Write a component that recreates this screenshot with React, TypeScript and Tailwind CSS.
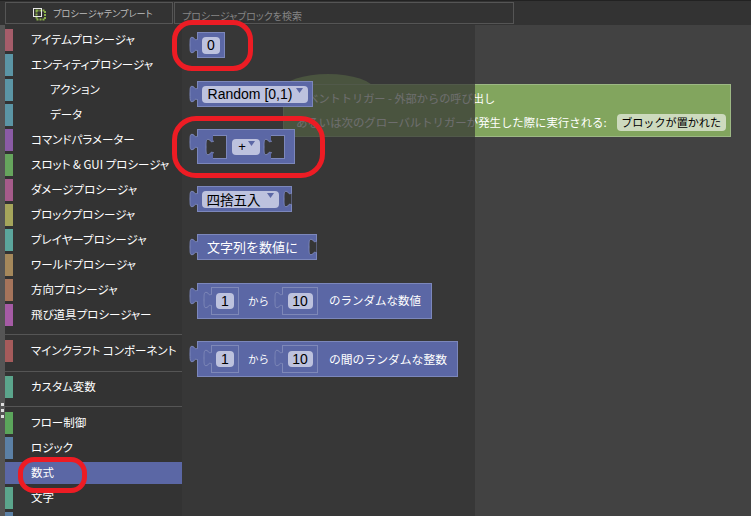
const JP = 'font-["Noto_Sans_CJK_JP",sans-serif]';
const TAB_PATH = 'M9 4 C7 5 6 5 5.5 4 C5 2.5 3 2 2 2.5 C1 3 1 7 1 10 C1 13 1 17 2 17.5 C3 18 5 17.5 5.5 16 C6 15 7 15 9 16';

type Row = { label: string; strip: string; sub?: boolean; active?: boolean };

const ROWS: Row[] = [
  { label: 'アイテムプロシージャ', strip: 'bg-[#a55d6a]' },
  { label: 'エンティティプロシージャ', strip: 'bg-[#5b95a5]' },
  { label: 'アクション', strip: 'bg-[#5b95a5]', sub: true },
  { label: 'データ', strip: 'bg-[#5b95a5]', sub: true },
  { label: 'コマンドパラメーター', strip: 'bg-[#8a5ba5]' },
  { label: 'スロット & GUI プロシージャ', strip: 'bg-[#66a55d]' },
  { label: 'ダメージプロシージャ', strip: 'bg-[#a55b8a]' },
  { label: 'ブロックプロシージャ', strip: 'bg-[#a5a55b]' },
  { label: 'プレイヤープロシージャ', strip: 'bg-[#5ba59c]' },
  { label: 'ワールドプロシージャ', strip: 'bg-[#a5885b]' },
  { label: '方向プロシージャ', strip: 'bg-[#a5745b]' },
  { label: '飛び道具プロシージャー', strip: 'bg-[#a55ba5]' },
];

function SideRow({ row }: { row: Row }) {
  return (
    <div className={`flex h-[22px] mb-[3px] shrink-0 items-center ${row.active ? 'bg-[#5b67a5]' : ''}`}>
      <div className={`w-2 h-full shrink-0 ${row.strip}`} />
      {row.label && (
        <span
          className={`${row.sub ? 'ml-[37px]' : 'ml-[18px]'} text-[11.5px] text-white whitespace-nowrap [font-feature-settings:"palt"]`}
        >
          {row.label}
        </span>
      )}
    </div>
  );
}

function Tab({ fill = '#5b67a5', stroke = '#7c87bb', className = '' }: { fill?: string; stroke?: string; className?: string }) {
  return (
    <svg width="9" height="20" viewBox="0 0 9 20" className={`shrink-0 ${className}`}>
      <path d={TAB_PATH} fill={fill} stroke={stroke} strokeWidth="1" />
    </svg>
  );
}

function Caret() {
  return (
    <svg width="7" height="5" viewBox="0 0 7 5" className="absolute top-[2px] right-[5px]">
      <polygon points="0,0 7,0 3.5,5" fill="#5b67a5" />
    </svg>
  );
}

function Field({ children, className, caret }: { children: React.ReactNode; className: string; caret?: boolean }) {
  return (
    <div
      className={`relative flex items-center justify-center rounded-[4px] bg-[#bdc2de] text-black whitespace-nowrap ${className}`}
    >
      {children}
      {caret && <Caret />}
    </div>
  );
}

function Block({ children, className, socket }: { children: React.ReactNode; className: string; socket?: boolean }) {
  return (
    <div className="flex items-start">
      <Tab className="mt-[3px] -mr-px z-10" />
      <div
        className={`relative flex items-center border border-[#7c87bb] bg-[#5b67a5] text-white ${className}`}
      >
        {children}
        {socket && (
          <svg width="9" height="20" viewBox="0 0 9 20" className="absolute right-[-1px] top-[2px]">
            <path d={`${TAB_PATH} Z`} fill="#363636" stroke="#7c87bb" strokeWidth="1" />
          </svg>
        )}
      </div>
    </div>
  );
}

// empty value input on the "+" block
function Hole({ className = '' }: { className?: string }) {
  return (
    <div className={`flex items-center shrink-0 ${className}`}>
      <Tab fill="#363636" stroke="#7c87bb" className="-mr-px z-10" />
      <div className="w-[14px] h-[24px] bg-[#363636] border-y border-r border-[#7c87bb]" />
    </div>
  );
}

// value input that holds a faint shadow number block
function NumberSlot({ value, className }: { value: string; className: string }) {
  return (
    <div className="flex items-start shrink-0">
      <Tab fill="#5b67a5" stroke="#7e88b8" className="mt-[3px] -mr-px z-10 ml-[-1px]" />
      <div className={`h-[28px] border border-[#7e88b8] flex items-center justify-center ${className}`}>
        <Field className={`${value.length > 1 ? 'w-[25px]' : 'w-[18px]'} h-[16px] text-[14px]`}>
          <span className='font-["Liberation_Sans",sans-serif]'>{value}</span>
        </Field>
      </div>
    </div>
  );
}

function RandomBlock({ label, width, labelSize }: { label: string; width: string; labelSize: string }) {
  return (
    <Block className={`${width} h-[36px] pl-[6px]`}>
      <NumberSlot value="1" className="w-[28px]" />
      <span className="ml-[9px] w-[20px] text-[10.5px] whitespace-nowrap">から</span>
      <div className="ml-[7px]">
        <NumberSlot value="10" className="w-[36px]" />
      </div>
      <span className={`ml-[11px] whitespace-nowrap ${labelSize}`}>{label}</span>
    </Block>
  );
}

export default function App() {
  return (
    <div className={`relative flex flex-col w-[751px] h-[516px] overflow-hidden bg-[#333] ${JP}`}>
      {/* top bar */}
      <div className="flex h-[25px] shrink-0 border-t border-[#222] bg-[#333] pt-px pl-[5px]">
        <div className="flex items-center w-[168px] h-[22px] border border-[#555] pl-[27px]">
          <svg width="13" height="13" viewBox="0 0 13 13" className="shrink-0 mt-[2px]">
            <rect x="3.5" y="2.5" width="8.5" height="9" fill="none" stroke="#8ab04a" strokeWidth="2" strokeDasharray="2 1" />
            <rect x="0.5" y="0.5" width="8" height="8" fill="none" stroke="#e8e8e8" strokeWidth="1" />
          </svg>
          <span className='ml-[7px] mt-[2px] text-[9.2px] text-[#bdbdbd] whitespace-nowrap [font-feature-settings:"palt"]'>
            プロシージャテンプレート
          </span>
        </div>
        <div className="flex items-center w-[340px] h-[22px] ml-px border border-[#555] pl-[7px]">
          <span className='mt-[4px] text-[10px] text-[#858585] whitespace-nowrap [font-feature-settings:"palt"]'>
            プロシージャブロックを検索
          </span>
        </div>
      </div>

      <div className="flex flex-1 min-h-0">
        {/* grip */}
        <div className="flex flex-col items-center w-[5px] shrink-0 bg-[#555] pt-[378px] gap-[3px]">
          <div className="w-[3px] h-[3px] bg-[#ddd]" />
          <div className="w-[3px] h-[3px] bg-[#ddd]" />
          <div className="w-[3px] h-[3px] bg-[#ddd]" />
        </div>

        {/* categories */}
        <div className="flex flex-col w-[177px] shrink-0 bg-[#333] pt-[4px]">
          {ROWS.map(r => (
            <SideRow key={r.label} row={r} />
          ))}
          <div className="h-px shrink-0 bg-[#555] mt-[5px] mb-[5px]" />
          <SideRow row={{ label: 'マインクラフト コンポーネント', strip: 'bg-[#a55b5b]' }} />
          <div className="h-px shrink-0 bg-[#555] mt-[6px] mb-[4px]" />
          <SideRow row={{ label: 'カスタム変数', strip: 'bg-[#5ba58c]' }} />
          <div className="h-px shrink-0 bg-[#555] mt-[5px] mb-[5px]" />
          <SideRow row={{ label: 'フロー制御', strip: 'bg-[#5ba55b]' }} />
          <SideRow row={{ label: 'ロジック', strip: 'bg-[#5b80a5]' }} />
          <SideRow row={{ label: '数式', strip: 'bg-[#5b67a5]', active: true }} />
          <SideRow row={{ label: '文字', strip: 'bg-[#5ba58c]' }} />
          <SideRow row={{ label: '', strip: 'bg-[#5b80a5]' }} />
        </div>

        {/* workspace */}
        <div className="relative flex-1 bg-[#424242] overflow-hidden">
          {/* event trigger block, under the flyout */}
          <div className="absolute left-[101px] top-[49px] w-[448px] h-[63px]">
            <div className="absolute left-0 top-0 w-[90px] h-[30px] rounded-t-[50%] bg-[#82a55e]" />
            <div className="absolute left-[12px] top-[55px] w-[16px] h-[8px] rounded-b-full bg-[#82a55e]" />
            <div className="absolute left-0 top-[10px] w-[448px] h-[53px] border border-[#9db884] bg-[#82a55e] text-white">
              <div className="pl-[12px] pt-[4px] text-[11.2px] leading-[18px] whitespace-nowrap">
                イベントトリガー - 外部からの呼び出し
              </div>
              <div className="flex items-center pl-[12px] mt-[6px] text-[11.4px] leading-[18px] whitespace-nowrap">
                あるいは次のグローバルトリガーが発生した際に実行される:
                <span className="ml-[10px] flex items-center justify-center w-[109px] h-[17px] rounded-[4px] bg-[#cddabe] text-black text-[11.1px]">
                  ブロックが置かれた
                </span>
              </div>
            </div>
          </div>

          {/* flyout */}
          <div className="absolute inset-y-0 left-0 w-[293px] bg-[#333]/[0.71] pt-[7px] pl-[7px]">
            <Block className="w-[28px] h-[26px] pl-[4px]">
              <Field className='w-[18px] h-[17px] text-[14px] font-["Liberation_Sans",sans-serif]'>0</Field>
            </Block>
            <div className="mt-[23px]">
              <Block className="w-[116px] h-[26px] pl-[4px]">
                <Field caret className='w-[106px] h-[17px] pr-[10px] text-[14px] font-["Liberation_Sans",sans-serif]'>
                  Random [0,1)
                </Field>
              </Block>
            </div>
            <div className="mt-[22px]">
              <Block className="w-[98px] h-[35px] pl-[7px]">
                <Hole />
                <Field caret className='ml-[5px] w-[28px] h-[16px] pr-[8px] text-[13px] font-["Liberation_Sans",sans-serif]'>
                  +
                </Field>
                <Hole className="ml-[3px]" />
              </Block>
            </div>
            <div className="mt-[22px]">
              <Block socket className="w-[95px] h-[26px] pl-[4px]">
                <Field caret className="w-[77px] h-[17px] pr-[14px] text-[13.5px]">
                  四捨五入
                </Field>
              </Block>
            </div>
            <div className="mt-[22px]">
              <Block socket className="w-[120px] h-[26px] pl-[9px]">
                <span className="text-[13px] whitespace-nowrap">文字列を数値に</span>
              </Block>
            </div>
            <div className="mt-[23px]">
              <RandomBlock label="のランダムな数値" width="w-[235px]" labelSize="text-[11.5px]" />
            </div>
            <div className="mt-[22px]">
              <RandomBlock label="の間のランダムな整数" width="w-[261px]" labelSize="text-[11.8px]" />
            </div>
          </div>
        </div>
      </div>

      {/* annotation marks */}
      <div className="absolute left-[172px] top-[20px] w-[81px] h-[51px] rounded-[20px] border-[5px] border-[#ed1c24]" />
      <div className="absolute left-[172px] top-[116px] w-[153px] h-[62px] rounded-[24px] border-[5px] border-[#ed1c24]" />
      <div className="absolute left-[18px] top-[457px] w-[69px] h-[36px] rounded-[16px] border-[5px] border-[#ed1c24]" />
    </div>
  );
}
